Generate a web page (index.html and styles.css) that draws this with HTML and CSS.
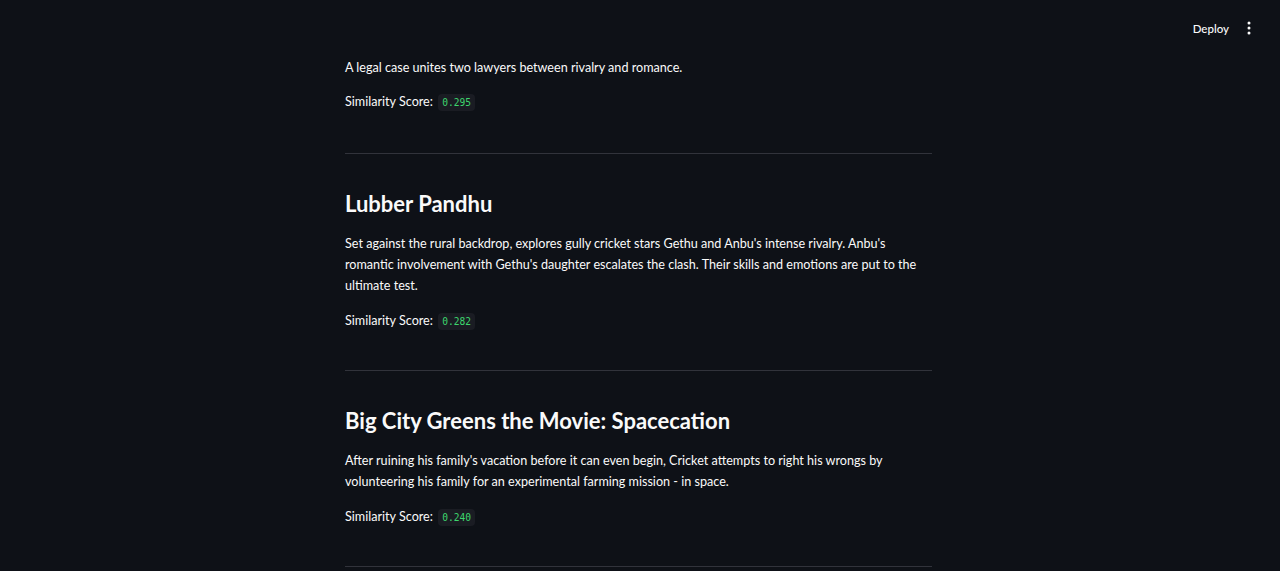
FILE: index.html
```html
<!DOCTYPE html>
<html>
<head>
<meta charset="utf-8">
<link rel="stylesheet" href="styles.css">
</head>
<body>
<header class="topbar">
  <span class="deploy">Deploy</span>
  <span class="kebab" aria-label="menu">
    <svg width="4" height="14" viewBox="0 0 4 14"><circle cx="2" cy="2" r="1.5" fill="#fafafa"/><circle cx="2" cy="7" r="1.5" fill="#fafafa"/><circle cx="2" cy="12" r="1.5" fill="#fafafa"/></svg>
  </span>
</header>
<main class="main">
  <section class="result first">
    <p class="desc">A legal case unites two lawyers between rivalry and romance.</p>
    <p class="score">Similarity Score: <code>0.295</code></p>
    <hr class="divider">
  </section>
  <section class="result">
    <h3 class="title">Lubber Pandhu</h3>
    <p class="desc">Set against the rural backdrop, explores gully cricket stars Gethu and Anbu's intense rivalry. Anbu's romantic involvement with Gethu's daughter escalates the clash. Their skills and emotions are put to the ultimate test.</p>
    <p class="score">Similarity Score: <code>0.282</code></p>
    <hr class="divider">
  </section>
  <section class="result">
    <h3 class="title">Big City Greens the Movie: Spacecation</h3>
    <p class="desc">After ruining his family's vacation before it can even begin, Cricket attempts to right his wrongs by volunteering his family for an experimental farming mission - in space.</p>
    <p class="score">Similarity Score: <code>0.240</code></p>
    <hr class="divider">
  </section>
</main>
</body>
</html>
```
FILE: styles.css
```css
html, body {
  margin: 0;
  padding: 0;
  background: #0e1117;
  color: #fafafa;
  font-family: Lato, "Noto Sans", sans-serif;
  height: 571px;
  overflow: hidden;
}
.topbar {
  position: absolute;
  top: 0;
  left: 0;
  right: 0;
  height: 56px;
  display: flex;
  align-items: center;
  justify-content: flex-end;
  gap: 18px;
  padding-right: 29px;
}
.deploy {
  font-size: 11.5px;
  color: #fafafa;
  font-weight: 500;
}
.kebab {
  display: flex;
  align-items: center;
}
.main {
  width: 587px;
  margin-left: 345px;
  padding-top: 57px;
}
.result {
  display: flex;
  flex-direction: column;
}
.title {
  margin: 36px 0 15px;
  font-size: 22px;
  line-height: 28px;
  font-weight: 700;
}
.desc {
  margin: 0 0 14px;
  font-size: 12.6px;
  line-height: 21px;
}
.first .desc {
  margin-bottom: 13px;
}
.score {
  margin: 0;
  font-size: 12.6px;
  line-height: 21px;
}
.score code {
  font-family: "DejaVu Sans Mono", "Liberation Mono", monospace;
  font-size: 9.6px;
  color: #3dd56d;
  background: #1a1c23;
  padding: 3px 4px;
  border-radius: 4px;
  margin-left: 2px;
}
.divider {
  margin: 40px 0 0;
  border: 0;
  border-top: 1px solid #31333b;
  height: 0;
}
.result + .result .divider {
  margin-top: 38px;
}
```
